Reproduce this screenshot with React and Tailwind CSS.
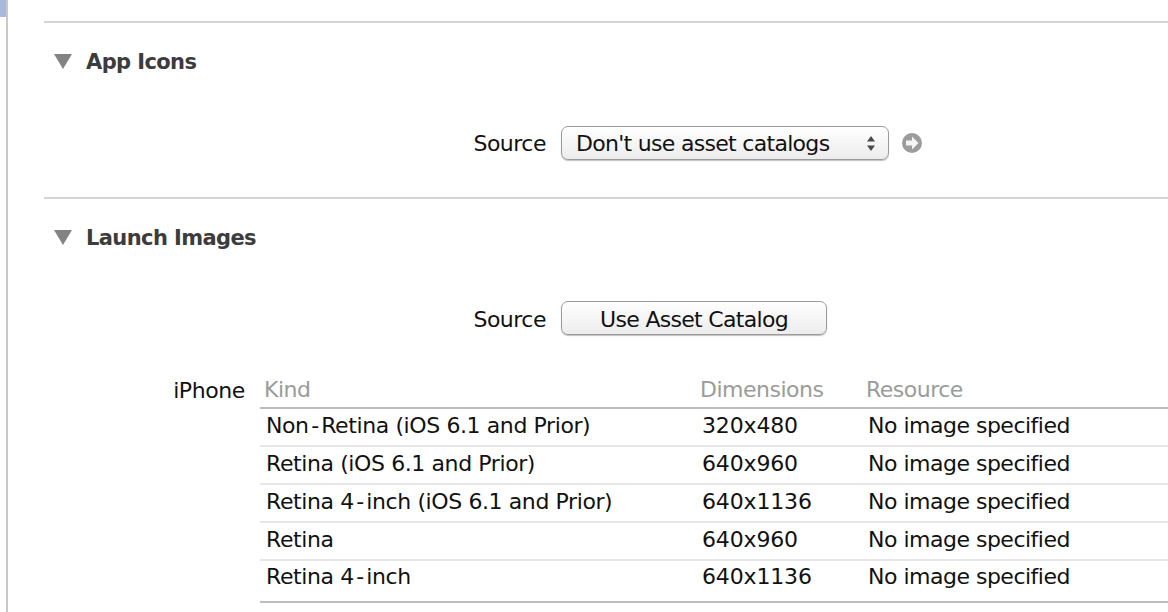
const ROWS = [
  { kind: ["Non", "Retina (iOS 6.1 and Prior)"], size: "320x480" },
  { kind: ["Retina (iOS 6.1 and Prior)"], size: "640x960" },
  { kind: ["Retina 4", "inch (iOS 6.1 and Prior)"], size: "640x1136" },
  { kind: ["Retina"], size: "640x960" },
  { kind: ["Retina 4", "inch"], size: "640x1136" },
];

// the reference draws a longer hyphen than DejaVu, so give it some room
function Kind({ parts }) {
  if (parts.length === 1) return <span className="w-[436px] tracking-[-0.4px]">{parts[0]}</span>;
  return (
    <span className="w-[436px] tracking-[-0.4px]">
      {parts[0]}
      <span className="px-[2.5px]">-</span>
      {parts[1]}
    </span>
  );
}

function Disclosure({ title }) {
  return (
    <div className="flex items-center h-[30px]">
      <svg width="18" height="15" viewBox="0 0 18 15" className="ml-[10px]">
        <path d="M0 0H18L9 15Z" fill="#838383" />
      </svg>
      <h2 className="ml-[14px] pt-[2px] text-[21px] font-bold text-[#3c3c3c] tracking-[-0.6px]">
        {title}
      </h2>
    </div>
  );
}

function SourceLabel({ children, className }) {
  return (
    <div className={`w-[517px] pr-[15px] text-right text-[22px] text-[#111] tracking-[-0.5px] ${className}`}>
      {children}
    </div>
  );
}

const buttonClass =
  "flex items-center h-[34px] rounded-[7px] border border-[#9a9a9a] bg-gradient-to-b from-white to-[#ececec] shadow-[0_1px_1px_rgba(0,0,0,0.25)] text-[22px] text-[#111] tracking-[-0.7px]";

export default function App() {
  return (
    <div className="relative h-[612px] w-[1168px] overflow-hidden bg-white font-['DejaVu_Sans',sans-serif] leading-none">
      <div className="absolute left-0 top-0 h-[17px] w-[6px] bg-[#a9b9dc]" />
      <div className="absolute left-[6px] top-0 h-full w-[2px] bg-[#c9c9c9]" />

      <div className="ml-[44px] pt-[21px]">
        <section className="h-[176px] border-t-2 border-[#d4d4d4] pt-[23px]">
          <Disclosure title="App Icons" />
          <div className="mt-[50px] flex items-center">
            <SourceLabel className="pt-[2px]">Source</SourceLabel>
            <div className={`${buttonClass} w-[328px] pl-[14px] pr-[13px] justify-between`}>
              <span className="pt-[2px]">Don't use asset catalogs</span>
              <svg width="8" height="15" viewBox="0 0 8 15">
                <path d="M4 0L8 5.5H0ZM4 15L0 9.5H8Z" fill="#4a4a4a" />
              </svg>
            </div>
            <svg width="20" height="20" viewBox="0 0 20 20" className="ml-[13px]">
              <circle cx="10" cy="10" r="10" fill="#9c9c9c" />
              <path d="M4 7.5H10V3.5L16.5 10L10 16.5V12.5H4Z" fill="#f4f4f4" />
            </svg>
          </div>
        </section>

        <section className="border-t-2 border-[#d4d4d4] pt-[23px]">
          <Disclosure title="Launch Images" />
          <div className="mt-[49px] flex items-center">
            <SourceLabel className="pt-[4px]">Source</SourceLabel>
            <div className={`${buttonClass} w-[266px] justify-center`}>
              <span className="pt-[4px]">Use Asset Catalog</span>
            </div>
          </div>

          <div className="mt-[40px] flex">
            <div className="w-[201px] pt-[5px] text-right text-[22px] text-[#111] tracking-[-0.4px]">
              iPhone
            </div>
            <div className="ml-[15px] flex-1 text-[22px] tracking-[-0.5px]">
              <div className="flex h-[34px] items-center border-b-2 border-[#bdbdbd] pb-[3px] pl-[4px] text-[#9b9b9b]">
                <span className="w-[436px]">Kind</span>
                <span className="w-[166px]">Dimensions</span>
                <span>Resource</span>
              </div>
              {ROWS.map((row, i) => (
                <div
                  key={i}
                  className={`flex items-center pl-[6px] text-[#111] ${
                    i === ROWS.length - 1
                      ? "h-[42px] pb-[9px] border-b-2 border-[#bdbdbd]"
                      : "h-[38px] pb-[2px] border-b-2 border-[#e6e6e6]"
                  }`}
                >
                  <Kind parts={row.kind} />
                  <span className="w-[166px] tracking-[-0.15px]">{row.size}</span>
                  <span>No image specified</span>
                </div>
              ))}
            </div>
          </div>
        </section>
      </div>
    </div>
  );
}
